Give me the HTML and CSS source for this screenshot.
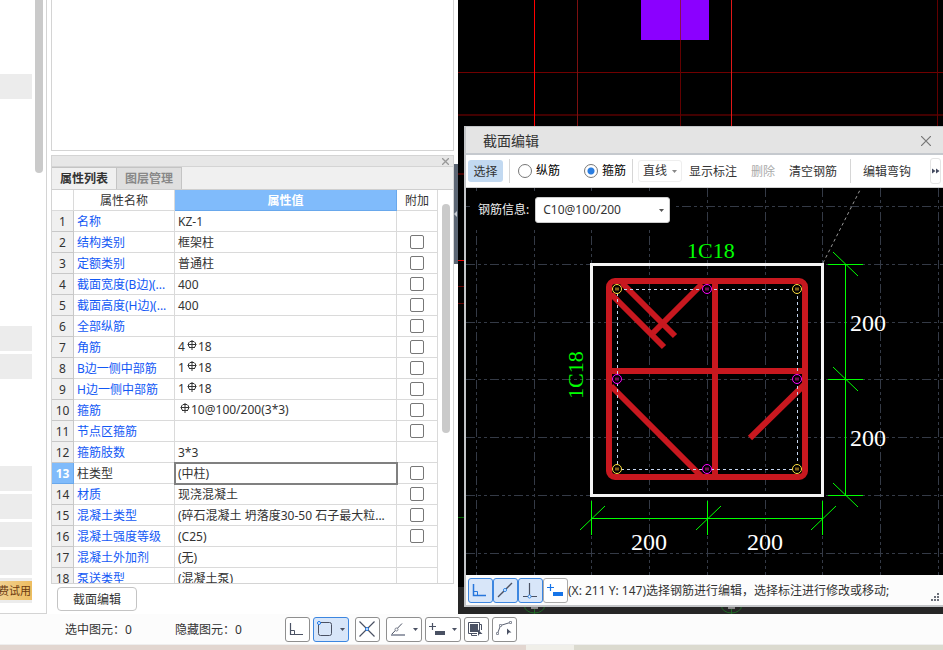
FILE: index.html
```html
<!DOCTYPE html>
<html lang="zh-CN">
<head>
<meta charset="utf-8">
<title>截面编辑</title>
<link rel="stylesheet" href="styles.css">
</head>
<body>
<svg class="defs" aria-hidden="true">
  <symbol id="rebar" viewBox="0 0 10 10"><path d="M5 0V10M3 1.500H7M0.500 4.500H9.500M2 7.500H8M3 1.500L1.500 3V6L3 7.500M7 1.500L8.500 3V6L7 7.500" fill="none" stroke="#333" stroke-width="1"/></symbol>
  <symbol id="caret" viewBox="0 0 5 3"><path d="M0 0H5L2.500 3Z" fill="#555"/></symbol>
</svg>
<main class="workspace">
  <aside class="nav">
    <div class="nav-list">
      <div class="nav-group first"><i></i></div>
      <div class="nav-group second"><i></i><i></i></div>
      <div class="nav-group third"><i></i><i></i><i></i><i></i><i><b class="trial">费试用</b></i></div>
    </div>
    <div class="nav-scroll"></div>
  </aside>

  <section class="side">
    <div class="tree"></div>
    <div class="panel">
      <div class="panel-bar"><button class="close" aria-label="关闭"><svg width="7" height="7" viewBox="0 0 7 7"><path d="M0 0L7 7M7 0L0 7" stroke="#999" stroke-width="1.300"/></svg></button></div>
      <div class="tabs"><button class="tab active">属性列表</button><button class="tab">图层管理</button></div>
      <div class="grid-wrap">
        <table class="props">
          <colgroup><col class="c-num"><col class="c-name"><col><col class="c-add"></colgroup>
          <thead><tr><th class="corner"></th><th>属性名称</th><th class="value-head">属性值</th><th>附加</th></tr></thead>
          <tbody>
            <tr><th>1</th><td>名称</td><td>KZ-1</td><td></td></tr>
            <tr><th>2</th><td>结构类别</td><td>框架柱</td><td><input type="checkbox" aria-label="结构类别"></td></tr>
            <tr><th>3</th><td>定额类别</td><td>普通柱</td><td><input type="checkbox" aria-label="定额类别"></td></tr>
            <tr><th>4</th><td>截面宽度(B边)(...</td><td>400</td><td><input type="checkbox" aria-label="截面宽度"></td></tr>
            <tr><th>5</th><td>截面高度(H边)(...</td><td>400</td><td><input type="checkbox" aria-label="截面高度"></td></tr>
            <tr><th>6</th><td>全部纵筋</td><td></td><td><input type="checkbox" aria-label="全部纵筋"></td></tr>
            <tr class="bar-row"><th>7</th><td>角筋</td><td>4<svg class="rebar"><use href="#rebar"/></svg>18</td><td><input type="checkbox" aria-label="角筋"></td></tr>
            <tr class="bar-row"><th>8</th><td>B边一侧中部筋</td><td>1<svg class="rebar"><use href="#rebar"/></svg>18</td><td><input type="checkbox" aria-label="B边一侧中部筋"></td></tr>
            <tr class="bar-row"><th>9</th><td>H边一侧中部筋</td><td>1<svg class="rebar"><use href="#rebar"/></svg>18</td><td><input type="checkbox" aria-label="H边一侧中部筋"></td></tr>
            <tr class="bar-row"><th>10</th><td>箍筋</td><td><svg class="rebar"><use href="#rebar"/></svg>10@100/200(3*3)</td><td><input type="checkbox" aria-label="箍筋"></td></tr>
            <tr><th>11</th><td>节点区箍筋</td><td></td><td><input type="checkbox" aria-label="节点区箍筋"></td></tr>
            <tr><th>12</th><td>箍筋肢数</td><td>3*3</td><td></td></tr>
            <tr class="current"><th>13</th><td>柱类型</td><td>(中柱)</td><td><input type="checkbox" aria-label="柱类型"></td></tr>
            <tr><th>14</th><td>材质</td><td>现浇混凝土</td><td><input type="checkbox" aria-label="材质"></td></tr>
            <tr><th>15</th><td>混凝土类型</td><td>(碎石混凝土 坍落度30-50 石子最大粒...</td><td><input type="checkbox" aria-label="混凝土类型"></td></tr>
            <tr><th>16</th><td>混凝土强度等级</td><td>(C25)</td><td><input type="checkbox" aria-label="混凝土强度等级"></td></tr>
            <tr><th>17</th><td>混凝土外加剂</td><td>(无)</td><td></td></tr>
            <tr><th>18</th><td>泵送类型</td><td>(混凝土泵)</td><td></td></tr>
          </tbody>
        </table>
        <div class="grid-scroll"></div>
      </div>
    </div>
    <div class="side-actions"><button class="section-btn">截面编辑</button></div>
  </section>

  <div class="splitter"><span></span></div>

  <section class="model">
    <svg class="model-view" width="100%" height="100%">
      <g fill="none" shape-rendering="crispEdges">
        <path d="M183 0h68v40h-68z" fill="#8b00ff"/>
        <path d="M0 72.500H2000" stroke="#700000"/>
        <path d="M0 115H2000M0 174H8" stroke="#420000" stroke-width="2"/>
        <path d="M0 286.500H8M0 303.500H8" stroke="#600000"/>
        <path d="M0 260.500H8" stroke="#f00000"/>
        <path d="M119.500 0V587" stroke="#7c1010"/>
        <path d="M222.500 0V40" stroke="#8a1050"/>
        <path d="M222.500 40V587M479.500 0V587" stroke="#620000"/>
        <path d="M76.500 0V587" stroke="#ff0000"/>
        <path d="M273.500 0V587" stroke="#e01818"/>
        <path d="M0 517.500H8" stroke="#006400"/>
      </g>
      <rect y="587" width="100%" height="100%" fill="#262626"/>
      <g fill="none" stroke="#216b27"><ellipse cx="76.500" cy="606" rx="10" ry="7"/><ellipse cx="273.500" cy="606" rx="10" ry="7"/><path d="M76.500 600V614M273.500 600V614"/></g>
      <path d="M73 608h7M270 608h7" stroke="#888" stroke-width="2"/>
    </svg>

    <div class="dialog" role="dialog" aria-label="截面编辑">
      <header class="dialog-title"><span>截面编辑</span><button class="close" aria-label="关闭"><svg width="10" height="10" viewBox="0 0 10 10"><path d="M0 0L10 10M10 0L0 10" stroke="#777" stroke-width="1.200"/></svg></button></header>
      <div class="toolbar">
        <button class="tool selected">选择</button>
        <span class="sep"></span>
        <label class="radio"><input type="radio" name="bar">纵筋</label>
        <label class="radio"><input type="radio" name="bar" checked>箍筋</label>
        <span class="sep"></span>
        <button class="tool line-tool">直线<svg width="5" height="3"><use href="#caret"/></svg></button>
        <button class="tool">显示标注</button>
        <button class="tool" disabled>删除</button>
        <button class="tool">清空钢筋</button>
        <span class="sep"></span>
        <button class="tool">编辑弯钩</button>
        <button class="more" aria-label="更多"><svg width="8" height="6" viewBox="0 0 8 6"><path d="M0 0.500L3.500 3L0 5.500ZM4 0.500L7.500 3L4 5.500Z" fill="#444b60"/></svg></button>
      </div>
      <div class="section-view">
        <svg class="section-svg" viewBox="466 188 477 387" preserveAspectRatio="xMinYMin slice">
          <g fill="none" stroke="#343a46" stroke-dasharray="9 3 3 3 3 3" shape-rendering="crispEdges">
            <path d="M476.500 188V575M534.500 188V575M591.500 188V575M649.500 188V575M707.500 188V575M765.500 188V575M822.500 188V575M880.500 188V575M938.500 188V575"/>
            <path d="M466 206.500H943M466 264.500H943M466 322.500H943M466 379.500H943M466 437.500H943M466 495.500H943M466 553.500H943"/>
          </g>
          <path d="M823 263L860 190" stroke="#999" stroke-dasharray="3 3" fill="none"/>
          <rect x="591.500" y="264.500" width="231" height="231" fill="none" stroke="#f4f4f4" stroke-width="3"/>
          <g fill="none" stroke="#c8181f" stroke-width="6">
            <path d="M611 294L664 347M622 283L675 336M702 284L651 335M611 386L701 476M804 385L750 438"/>
            <rect x="609" y="281" width="196" height="196" rx="6"/>
            <path d="M715 281V477M609 371H805"/>
          </g>
          <rect x="617.500" y="289.500" width="180" height="180" fill="none" stroke="#c4d4ee" stroke-dasharray="3 3" shape-rendering="crispEdges"/>
          <g fill="#000" stroke="#ffe040"><circle cx="617" cy="289" r="4.500"/><circle cx="797" cy="289" r="4.500"/><circle cx="617" cy="469" r="4.500"/><circle cx="797" cy="469" r="4.500"/></g>
          <g fill="#000" stroke="#ff00ff"><circle cx="707" cy="289" r="4.500"/><circle cx="617" cy="379" r="4.500"/><circle cx="797" cy="379" r="4.500"/><circle cx="707" cy="469" r="4.500"/></g>
          <path d="M615 289h4M795 289h4M615 469h4M795 469h4" stroke="#80601a" stroke-width="3"/>
          <path d="M705 289h4M615 379h4M795 379h4M705 469h4" stroke="#701050" stroke-width="3"/>
          <g fill="none" stroke="#00ff00">
            <path shape-rendering="crispEdges" d="M845.500 264V496M828 264.500H863M828 379.500H863M828 495.500H863M591 518.500H823M591.500 501V535M707.500 501V535M822.500 501V535"/>
            <path d="M833 252L858 276M833 367L858 391M833 483L858 507M580 530L605 506M696 530L721 506M811 530L836 506"/>
          </g>
          <g class="cad-text"><text class="mark" x="687" y="258">1C18</text><text class="mark" transform="translate(583 399) rotate(-90)">1C18</text>
          <text x="631" y="550">200</text><text x="747" y="550">200</text><text x="850" y="331">200</text><text x="850" y="446">200</text></g>
        </svg>
        <div class="rebar-info"><label for="info">钢筋信息:</label><span class="select-box"><select id="info"><option>C10@100/200</option></select><svg width="5" height="3"><use href="#caret"/></svg></span></div>
      </div>
      <footer class="dialog-status">
        <button class="icon-btn on" aria-label="正交"><svg width="25" height="25" viewBox="0 0 25 25"><g fill="none" stroke="#2676dc" stroke-width="1.500"><path d="M5.500 6V17.500H18"/><path d="M5.500 13.500H9.500V17.500" stroke-width="1"/></g></svg></button><button class="icon-btn on" aria-label="最近点"><svg width="25" height="25" viewBox="0 0 25 25"><path d="M5 19L19 5" stroke="#4a5163" stroke-width="1.300"/><circle cx="12" cy="12" r="1.500" fill="#fff" stroke="#2a83e8"/></svg></button><button class="icon-btn on" aria-label="垂点"><svg width="25" height="25" viewBox="0 0 25 25"><path d="M11.500 5V18M5 18.500H19" stroke="#4a5163" stroke-width="1.200"/><circle cx="11.500" cy="18.500" r="1.500" fill="#fff" stroke="#2a83e8"/></svg></button><button class="icon-btn light" aria-label="输入"><svg width="25" height="25" viewBox="0 0 25 25"><path d="M4 9.500H11M7.500 6V13" stroke="#1674e8" stroke-width="1.200"/><path d="M10 14h10v4H10z" fill="#1674e8"/></svg></button>
        <span class="message">(X: 211 Y: 147)选择钢筋进行编辑，选择标注进行修改或移动;</span>
        <svg class="grip" width="8" height="8" viewBox="0 0 8 8"><path d="M6 0h2v2H6zM3 3h2v2H3zM6 3h2v2H6zM0 6h2v2H0zM3 6h2v2H3zM6 6h2v2H6z" fill="#6c707a"/></svg>
      </footer>
    </div>
  </section>
</main>

<footer class="status">
  <span class="count">选中图元：0</span><span class="count hidden-count">隐藏图元：0</span>
  <div class="snap">
    <button class="icon-btn" aria-label="正交"><svg width="25" height="25" viewBox="0 0 25 25"><g fill="none" stroke="#4a5163" stroke-width="1.200"><path d="M5.500 6V17.500H18"/><path d="M5.500 13.500H9.500V17.500" stroke-width="1"/></g></svg></button>
    <button class="icon-btn wide on spaced" aria-label="对象捕捉"><svg width="36" height="25" viewBox="0 0 36 25"><rect x="5.500" y="5.500" width="13" height="13" rx="2" fill="none" stroke="#4a5163"/><circle cx="6" cy="6" r="1.500" fill="#fff" stroke="#1674e8"/><path d="M27 11H32L29.500 14Z" fill="#4a5163"/></svg></button>
    <button class="icon-btn spaced" aria-label="交点"><svg width="25" height="25" viewBox="0 0 25 25"><path d="M4.500 4.500L19.500 19.500M19.500 4.500L4.500 19.500" stroke="#4a5163" stroke-width="1.200"/><circle cx="12" cy="12" r="1.500" fill="#fff" stroke="#1674e8"/></svg></button>
    <button class="icon-btn wide" aria-label="角度"><svg width="36" height="25" viewBox="0 0 36 25"><path d="M5 18L16 6.500" stroke="#4a5163"/><path d="M5 18H19" stroke="#9a9fac" stroke-width="2"/><circle cx="10.500" cy="12.500" r="1.500" fill="#fff" stroke="#7b8190"/><path d="M27 11H32L29.500 14Z" fill="#4a5163"/></svg></button>
    <button class="icon-btn wide" aria-label="输入"><svg width="36" height="25" viewBox="0 0 36 25"><path d="M4 9.500H11M7.500 6V13" stroke="#4a5163" stroke-width="1.200"/><path d="M10 14h10v4H10z" fill="#4a5163"/><path d="M27 11H32L29.500 14Z" fill="#4a5163"/></svg></button>
    <button class="icon-btn" aria-label="多选"><svg width="25" height="25" viewBox="0 0 25 25"><path d="M6 7h8v8H6z" fill="#4a5163"/><path d="M4.500 5.500H15.500V14M4.500 5.500V16.500H13M15.500 7.500H17.500V13M7.500 16.500V18.500H13" fill="none" stroke="#4a5163"/><path d="M14 12.500L18.500 17L15.500 17L14 19Z" fill="#4a5163"/></svg></button>
    <button class="icon-btn" aria-label="折线选择"><svg width="25" height="25" viewBox="0 0 25 25"><path d="M5.500 16.500L8.500 8.500L18 5.500" fill="none" stroke="#5a6070"/><g fill="#fff" stroke="#8a8f9b"><path d="M4.500 15.500h2v2h-2zM7.500 7.500h2v2h-2zM17.500 4.500h2v2h-2z"/></g><path d="M15 11.500L19.500 15.500H17L15 18Z" fill="#4a5163"/></svg></button>
  </div>
</footer>
<div class="desk"></div>
</body>
</html>
```

FILE: styles.css
```css
* { box-sizing: border-box; }
html, body { height: 100%; }
body {
  margin: 0;
  display: flex;
  flex-direction: column;
  overflow: hidden;
  background: #fff;
  color: #333;
  font: 12px/16px "Noto Sans", "Noto Sans CJK SC", sans-serif;
}
button, select, input { font: inherit; color: inherit; margin: 0; }
button { padding: 0; border: 0; background: none; white-space: nowrap; }
svg { display: block; }
.defs { position: absolute; width: 0; height: 0; }

.workspace { flex: 1; min-height: 0; display: flex; }

/* left navigation */
.nav {
  flex: none;
  width: 47px;
  margin-right: 4px;
  display: flex;
  gap: 3px;
  border-right: 1px solid #d4d4d4;
  border-bottom: 1px solid #d4d4d4;
}
.nav-list { width: 32px; }
.nav-group { display: flex; flex-direction: column; gap: 3px; }
.nav-group i { display: flex; align-items: center; height: 25px; background: #ececec; font-style: normal; }
.first { padding-top: 74px; }
.second { padding-top: 227px; }
.third { padding-top: 87px; }
.trial {
  display: flex;
  justify-content: flex-end;
  width: 32px;
  height: 19px;
  padding-right: 1px;
  overflow: hidden;
  background: linear-gradient(90deg, #f0d090, #eebd60);
  color: #6b3a10;
  font-size: 11px;
  line-height: 19px;
  font-weight: 400;
  white-space: nowrap;
}
.nav-scroll { width: 8px; height: 173px; border-radius: 0 0 4px 4px; background: #cacaca; }

/* property side */
.side { flex: none; width: 403px; display: flex; flex-direction: column; }
.tree { flex: none; height: 151px; margin-bottom: 4px; border: 1px solid #d4d4d4; border-top: 0; }
.panel {
  flex: 1;
  min-height: 0;
  display: flex;
  flex-direction: column;
  border: 1px solid #d4d4d4;
  background: #f0f0f0;
}
.panel-bar {
  flex: none;
  display: flex;
  justify-content: flex-end;
  align-items: center;
  height: 11px;
  padding-right: 4px;
  border-bottom: 1px solid #d4d4d4;
  background: #e7e7e7;
}
.tabs { flex: none; display: flex; height: 23px; border-bottom: 1px solid #cfcfcf; }
.tab { width: 65px; border-right: 1px solid #c4c4c4; border-top: 1px solid #c4c4c4; background: #dfdfdf; color: #888; font-weight: 700; }
.tab.active { background: #f0f0f0; color: #333; }
.grid-wrap { flex: 1; min-height: 0; display: flex; overflow: hidden; background: #fff; }
.props { flex: 1; width: 0; table-layout: fixed; border-collapse: separate; border-spacing: 0; align-self: flex-start; }
.c-num { width: 22px; }
.c-name { width: 101px; }
.c-add { width: 41px; }
.props th, .props td {
  height: 21px;
  padding: 2px 3px 0;
  border-right: 1px solid #dadada;
  border-bottom: 1px solid #dadada;
  overflow: hidden;
  white-space: nowrap;
  line-height: 16px;
  font-weight: 400;
  text-align: left;
}
.props thead th { text-align: center; }
.props thead .value-head { background: #80bbfb; border-color: #69a8ec; color: #fff; font-weight: 700; }
.props tbody th { padding: 2px 0 0; background: #f0f0f0; border-color: #c8c8c8; text-align: center; }
.props td:nth-child(2) { color: #1258f5; }
.props td:last-child { padding-top: 0; }
.props .bar-row td:nth-child(3) { padding-top: 0; }
.props .current th { background: #80bbfb; border-color: #69a8ec; color: #fff; font-weight: 700; }
.props .current td:nth-child(2) { color: #333; }
.props .current td:nth-child(3) { outline: 2px solid #808080; outline-offset: -1px; }
.rebar { display: inline-block; width: 10px; height: 10px; margin: 0 1px 0 2px; vertical-align: 1px; }
input[type="checkbox"] {
  display: block;
  width: 14px;
  height: 14px;
  margin: 0 auto;
  appearance: none;
  border: 1px solid #777;
  border-radius: 2px;
  background: #fff;
}
.grid-scroll { flex: none; width: 8px; height: 229px; margin: 14px 3px 0 4px; border-radius: 4px; background: #cacaca; }
.side-actions { flex: none; height: 30px; padding: 3px 6px; }
.section-btn { width: 80px; height: 24px; padding-top: 2px; border: 1px solid #c4c4c4; border-radius: 4px; background: #fff; }

.splitter {
  flex: none;
  width: 4px;
  height: 100px;
  margin-top: 164px;
  display: flex;
  align-items: center;
  background: #5c6674;
}
.splitter span { border: 3px solid transparent; border-right-color: #c8ccd2; border-left: 0; }

/* model canvas and floating editor window */
.model { flex: 1; min-width: 0; position: relative; overflow: hidden; background: #000; }
.dialog {
  position: absolute;
  inset: 126px 0 7px 6px;
  display: flex;
  flex-direction: column;
  border: 2px solid #c3c5c8;
  border-top-width: 1px;
  border-right: 0;
  background: #fcfcfc;
}
.dialog-title {
  flex: none;
  display: flex;
  align-items: center;
  justify-content: space-between;
  height: 28px;
  padding: 1px 12px 0 17px;
  border-bottom: 2px solid #c5c9ce;
  background: #e4e4e4;
  font-size: 14px;
}
.toolbar {
  flex: none;
  display: flex;
  align-items: center;
  height: 33px;
  padding: 0 2px;
  border-bottom: 1px solid #d0d0d0;
  background: #fff;
}
.tool { height: 22px; padding: 2px 7px 0; border-radius: 3px; }
.tool.selected { width: 35px; padding: 2px 0 0; background: #c2d9f1; }
.tool:disabled { color: #aaa; }
.sep { width: 1px; height: 24px; margin: 0 5px 0 6px; background: #d6d6d6; }
.radio { display: flex; align-items: center; gap: 4px; color: #000; }
.radio + .radio { margin-left: 21px; }
input[type="radio"] {
  width: 14px;
  height: 14px;
  margin-left: 3px;
  appearance: none;
  border: 1px solid #777;
  border-radius: 50%;
  background: #fff;
}
input[type="radio"]:checked { background: radial-gradient(circle, #2a7de0 3px, #fff 4px); }
.line-tool { display: flex; align-items: center; gap: 5px; padding: 0 4px; border: 1px solid #eee; }
.line-tool svg { opacity: 0.7; }
.more { display: flex; align-items: center; justify-content: center; width: 11px; height: 26px; margin-left: auto; border: 1px solid #e4e4e4; border-radius: 3px; }
.section-view { flex: 1; min-height: 0; position: relative; overflow: hidden; background: #000; }
.section-svg { width: 100%; height: 100%; }
.cad-text { font: 24px "Liberation Serif", serif; fill: #fff; }
.mark { font-size: 22px; fill: #00ff00; }
.rebar-info {
  position: absolute;
  left: 4px;
  top: 3px;
  display: flex;
  align-items: center;
  gap: 6px;
  height: 38px;
  padding: 0 4px 0 8px;
  background: #000;
  color: #eee;
}
.select-box { position: relative; }
.select-box select {
  display: block;
  width: 135px;
  height: 26px;
  padding: 0 7px;
  appearance: none;
  border: 1px solid #ccc;
  border-radius: 3px;
  background: #fff;
  color: #333;
}
.select-box svg { position: absolute; right: 6px; top: 12px; }
.dialog-status { flex: none; display: flex; align-items: center; height: 30px; padding: 0 4px 0 2px; }
.message { padding-top: 2px; white-space: nowrap; }
.grip { margin-left: auto; align-self: flex-end; margin-bottom: 4px; }

.icon-btn { flex: none; width: 25px; height: 25px; border: 1px solid #8f8f8f; border-radius: 3px; background: #fff; }
.icon-btn svg { margin: -1px; }
.icon-btn.wide { width: 36px; }
.icon-btn.on { border-color: #3c86e0; background: #d8e6f9; }
.icon-btn.light { border-color: #aaa; }

/* application status bar */
.status { flex: none; display: flex; align-items: center; height: 31px; padding-left: 65px; background: #fcfcfc; border-bottom: 1px solid #eee; }
.count { width: 110px; padding-top: 2px; }
.snap { display: flex; gap: 3px; }
.spaced { margin-right: 3px; }
.desk { flex: none; height: 5px; background: linear-gradient(90deg, #e2d6d0 0 526px, #f0efe9 526px 574px, #dbdacf 574px); }
```
